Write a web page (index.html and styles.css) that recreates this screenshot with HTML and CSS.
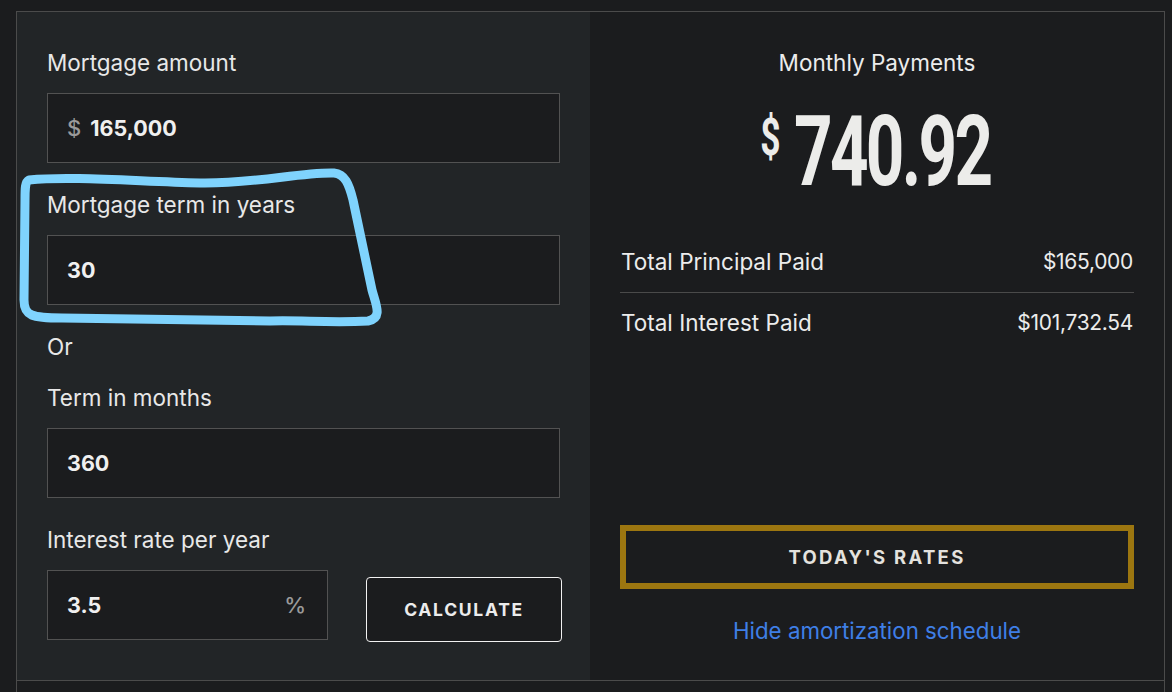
FILE: index.html
```html
<!DOCTYPE html>
<html lang="en">
<head>
<meta charset="utf-8">
<title>Mortgage calculator</title>
<link rel="stylesheet" href="styles.css">
</head>
<body>
<div class="frame">
  <div class="calc">
    <section class="inputs">
      <label class="label">Mortgage amount</label>
      <div class="field">
        <span class="affix">$</span>
        <input class="value" type="text" value="165,000">
      </div>

      <label class="label gap">Mortgage term in years</label>
      <div class="field">
        <input class="value" type="text" value="30">
      </div>

      <div class="label gap or">Or</div>

      <label class="label gap-sm">Term in months</label>
      <div class="field">
        <input class="value" type="text" value="360">
      </div>

      <label class="label gap">Interest rate per year</label>
      <div class="rate-row">
        <div class="field rate">
          <input class="value" type="text" value="3.5">
          <span class="affix">%</span>
        </div>
        <button class="btn-calc" type="button">CALCULATE</button>
      </div>
    </section>

    <section class="results">
      <div class="monthly-title">Monthly Payments</div>
      <div class="amount-wrap">
        <div class="amount"><span class="cur">$</span><span class="num">740.92</span></div>
      </div>
      <div class="row first">
        <span>Total Principal Paid</span><span class="amt">$165,000</span>
      </div>
      <div class="row">
        <span>Total Interest Paid</span><span class="amt">$101,732.54</span>
      </div>
      <button class="btn-rates" type="button">TODAY'S RATES</button>
      <a class="link" href="#">Hide amortization schedule</a>
    </section>
  </div>
  <div class="below"></div>
</div>

<svg class="scribble" width="1172" height="692" viewBox="0 0 1172 692" aria-hidden="true">
  <path d="M29,180 C70,176 130,181 200,183 C255,184 300,172 334,173 C345,174 349,184 353,200 L372,290 C376,305 383,318 368,321 C330,323 300,320 270,321 L62,318 C32,318 24,316 24,300 L25,200 C25,188 25,182 29,180 Z"
        fill="none" stroke="#7fd3fd" stroke-width="9" stroke-linejoin="round" stroke-linecap="round"/>
</svg>
</body>
</html>
```

FILE: styles.css
```css
* { box-sizing: border-box; }

html, body {
  margin: 0;
  padding: 0;
  height: 100%;
  background: #1b1c1e;
  overflow: hidden;
}

body {
  position: relative;
  font-family: Inter, "Open Sans", sans-serif;
  color: #e9e9e9;
}

.frame {
  margin: 11px 7px 0 16px;
  border: 1px solid #4b4b4b;
  border-bottom: none;
  min-height: 700px;
}

.calc {
  display: grid;
  grid-template-columns: 573px 574px;
  height: 669px;
  border-bottom: 1px solid #4b4b4b;
}

.inputs {
  background: #222527;
  padding: 39px 26px 0 30px;
  display: flex;
  flex-direction: column;
}

.label {
  display: block;
  font-size: 22.5px;
  line-height: 24px;
  color: #e8e8e8;
  margin-bottom: 18px;
}

.label.gap { margin-top: 30px; margin-bottom: 18px; }
.label.or { margin-bottom: 0; }
.label.gap-sm { margin-top: 27px; margin-bottom: 18px; }

.field {
  height: 70px;
  width: 513px;
  flex-shrink: 0;
  border: 1px solid #525252;
  background: #1b1c1e;
  display: flex;
  align-items: center;
  padding: 0 21px 0 19px;
}

.affix {
  font-size: 22px;
  color: #9a9a9a;
  font-weight: 500;
}

.field .affix:first-child { margin-right: 9px; }

.value {
  flex: 1;
  min-width: 0;
  background: transparent;
  border: none;
  outline: none;
  padding: 0;
  font-family: inherit;
  font-size: 21.5px;
  font-weight: 700;
  color: #f0f0f0;
}

.rate-row {
  display: flex;
  align-items: flex-start;
  gap: 38px;
}

.field.rate { width: 281px; }

.btn-calc {
  flex-shrink: 0;
  margin-top: 7px;
  width: 196px;
  height: 65px;
  border: 1.5px solid #f2f2f2;
  border-radius: 4px;
  background: #1b1c1e;
  color: #ececec;
  font-family: inherit;
  font-size: 17.5px;
  font-weight: 700;
  letter-spacing: 1.7px;
}

.results {
  background: #1b1c1e;
  padding: 39px 30px 36px 30px;
  display: flex;
  flex-direction: column;
}

.monthly-title {
  text-align: center;
  font-size: 22.5px;
  line-height: 24px;
  color: #ececec;
}

.amount-wrap {
  margin-top: 27px;
  display: flex;
  justify-content: center;
  height: 98px;
}

.amount {
  display: flex;
  align-items: flex-start;
  transform: translateX(-2px) scaleX(0.68);
  font-family: Roboto, "Liberation Sans", sans-serif;
  font-weight: 700;
  color: #ececea;
}

.cur {
  font-size: 52px;
  line-height: 1;
  margin-top: 10px;
  margin-right: 20px;
}

.num {
  font-size: 99px;
  line-height: 1;
  letter-spacing: -4px;
}

.row {
  display: flex;
  justify-content: space-between;
  font-size: 22.5px;
  line-height: 24px;
  color: #ececec;
  padding: 18px 1px 0 1px;
}

.row .amt {
  font-size: 21px;
  letter-spacing: -0.3px;
}

.row.first {
  margin-top: 32px;
  padding-bottom: 18px;
  border-bottom: 1px solid #4a4a4a;
}

.btn-rates {
  margin-top: auto;
  height: 64px;
  width: 100%;
  border: 6px solid #9c7610;
  background: #1b1c1e;
  color: #e4e2de;
  font-family: inherit;
  font-size: 18.5px;
  font-weight: 700;
  letter-spacing: 2.3px;
}

.link {
  margin-top: 29px;
  text-align: center;
  font-size: 22.3px;
  line-height: 26px;
  color: #3f7fe6;
  text-decoration: none;
}

.below { height: 40px; }

.scribble {
  position: absolute;
  left: 0;
  top: 0;
  pointer-events: none;
}
```
